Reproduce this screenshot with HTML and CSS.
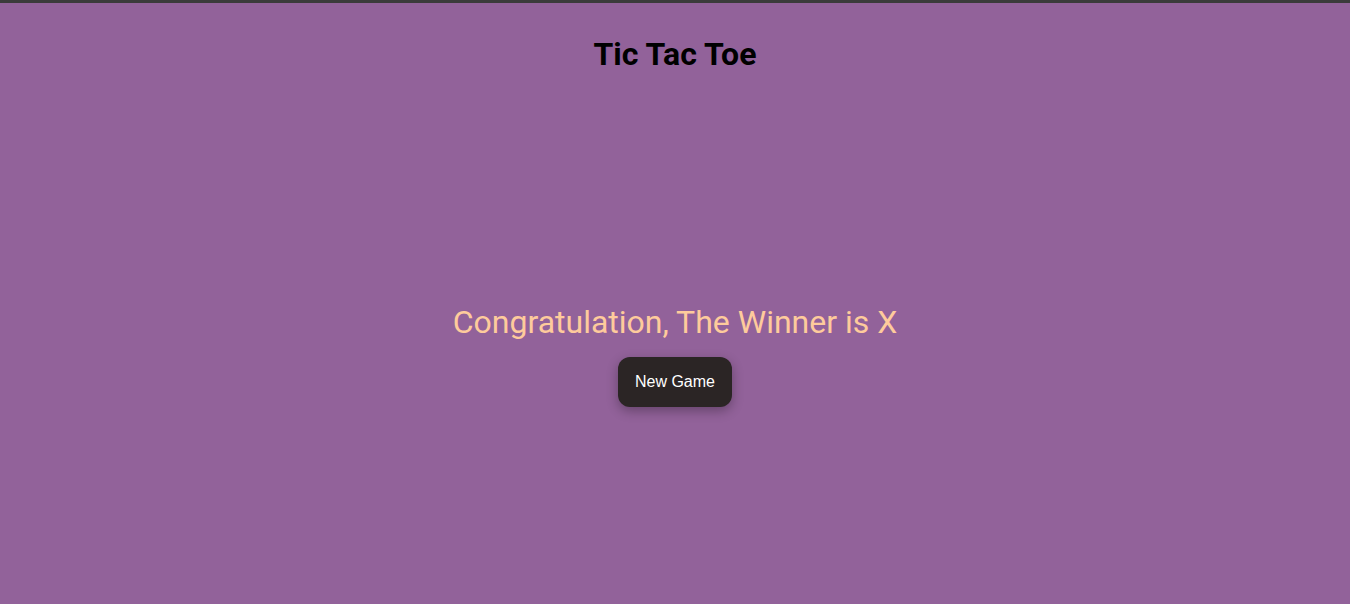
FILE: index.html
```html
<!DOCTYPE html>
<html lang="en">
<head>
<meta charset="utf-8">
<title>Tic Tac Toe</title>
<link rel="stylesheet" href="styles.css">
</head>
<body>
<main class="app">
  <h1 class="title">Tic Tac Toe</h1>
  <section class="result">
    <p class="winner">Congratulation, The Winner is X</p>
    <button class="new-game" type="button">New Game</button>
  </section>
</main>
</body>
</html>
```

FILE: styles.css
```css
html, body {
  margin: 0;
  padding: 0;
}
body {
  min-height: 601px;
  background: #92629a;
  border-top: 3px solid #3b3b3b;
  font-family: Roboto, "Liberation Sans", Arial, sans-serif;
}
.app {
  display: flex;
  flex-direction: column;
  align-items: center;
}
.title {
  margin: 32px 0 0;
  font-size: 32px;
  font-weight: 700;
  color: #000;
}
.result {
  margin-top: 230px;
  display: flex;
  flex-direction: column;
  align-items: center;
  gap: 16px;
}
.winner {
  margin: 0;
  font-size: 32px;
  font-weight: 400;
  color: #fecb9c;
}
.new-game {
  font-family: "Liberation Sans", Arial, sans-serif;
  font-size: 16px;
  color: #fff;
  background: #2b2525;
  border: none;
  border-radius: 12px;
  padding: 16px 17px;
  box-shadow: 0 4px 12px rgba(0, 0, 0, 0.3);
  cursor: pointer;
}
```
